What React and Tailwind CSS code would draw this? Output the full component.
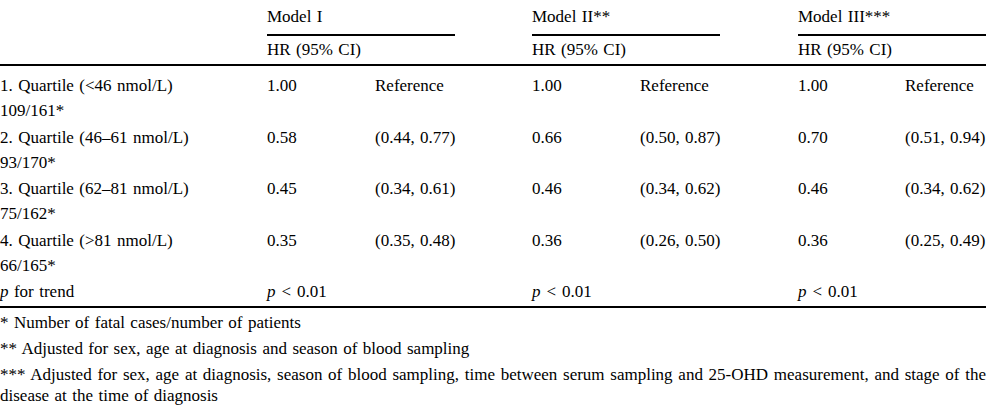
import React from "react";

const rows = [
  {
    a: "1. Quartile (<46 nmol/L)",
    b: "109/161*",
    v: ["1.00", "Reference", "1.00", "Reference", "1.00", "Reference"],
  },
  {
    a: "2. Quartile (46–61 nmol/L)",
    b: "93/170*",
    v: ["0.58", "(0.44, 0.77)", "0.66", "(0.50, 0.87)", "0.70", "(0.51, 0.94)"],
  },
  {
    a: "3. Quartile (62–81 nmol/L)",
    b: "75/162*",
    v: ["0.45", "(0.34, 0.61)", "0.46", "(0.34, 0.62)", "0.46", "(0.34, 0.62)"],
  },
  {
    a: "4. Quartile (>81 nmol/L)",
    b: "66/165*",
    v: ["0.35", "(0.35, 0.48)", "0.36", "(0.26, 0.50)", "0.36", "(0.25, 0.49)"],
  },
];

const grid = "grid grid-cols-[267px_108px_157px_108px_158px_107px_1fr]";

function Group({ title, w }) {
  return (
    <div className={w}>
      <div className="w-[188px]">
        <div className="pt-[3.5px] pb-[5.5px] border-b-2 border-black">{title}</div>
        <div className="pt-[1px] pb-[2.4px]">HR (95% CI)</div>
      </div>
    </div>
  );
}

function PVal() {
  return (
    <div className="col-span-2 whitespace-nowrap">
      <i>p</i>
      <span className="ml-[6px] mr-[6px]">&lt;</span>0.01
    </div>
  );
}

export default function App() {
  return (
    <div
      className="bg-white text-black w-[990px] h-[411px] overflow-hidden"
      style={{ fontFamily: '"Liberation Serif", "Times New Roman", serif' }}
    >
      <div className="w-[986px] text-[17px] leading-[25px] [word-spacing:1.2px]">
        <div className="flex border-b-2 border-black">
          <div className="w-[267px]" />
          <Group title="Model I" w="w-[265px]" />
          <Group title="Model II**" w="w-[266px]" />
          <Group title="Model III***" w="flex-1" />
        </div>
        <div className="pt-[6.25px] pb-[1.25px] border-b-2 border-black">
          {rows.map((r, i) => (
            <div key={i} className={`${grid} py-[0.75px]`}>
              <div>
                <div>{r.a}</div>
                <div>{r.b}</div>
              </div>
              {r.v.map((x, j) => (
                <div key={j}>{x}</div>
              ))}
            </div>
          ))}
          <div className={`${grid} py-[0.75px]`}>
            <div>
              <i>p</i> for trend
            </div>
            <PVal />
            <PVal />
            <PVal />
          </div>
        </div>
        <div className="pt-[4px] text-[17px] leading-[21px] flex flex-col gap-[5px]">
          <p>* Number of fatal cases/number of patients</p>
          <p>** Adjusted for sex, age at diagnosis and season of blood sampling</p>
          <p>
            <span className="block text-justify [text-align-last:justify] [word-spacing:0px]">
              *** Adjusted for sex, age at diagnosis, season of blood sampling, time between serum sampling and 25-OHD
              measurement, and stage of the
            </span>
            <span className="block">disease at the time of diagnosis</span>
          </p>
        </div>
      </div>
    </div>
  );
}
